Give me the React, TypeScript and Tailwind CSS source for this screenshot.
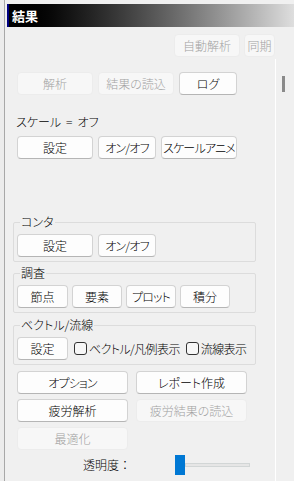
import type { ReactNode } from 'react';

const FONT = "font-['Noto_Sans_CJK_JP','Noto_Sans',sans-serif] [font-feature-settings:'palt'] font-light";

function Btn({ children, w, disabled = false, tight = false }: { children: ReactNode; w: string; disabled?: boolean; tight?: boolean }) {
  return (
    <div
      className={`${w} h-[23px] shrink-0 flex items-center justify-center rounded-[4px] border text-[12px] leading-none whitespace-nowrap ${
        tight ? 'tracking-[-0.8px]' : ''
      } ${
        disabled
          ? 'bg-[#f7f7f7] border-[#ececec] text-[#a2a2a2]'
          : 'bg-[#fdfdfd] border-[#d3d3d3] border-b-[#b5b5b5] text-black'
      }`}
    >
      {children}
    </div>
  );
}

function Group({ label, children, className = '' }: { label: string; children: ReactNode; className?: string }) {
  return (
    <fieldset className={`ml-[8px] w-[243px] border border-[#dcdcdc] rounded-[2px] px-[3px] pt-[5px] pb-[4px] ${className}`}>
      <legend className="ml-[3px] px-[1px] text-[12px] leading-[14px] text-black whitespace-nowrap">{label}</legend>
      {children}
    </fieldset>
  );
}

function Check({ label }: { label: string }) {
  return (
    <div className="flex items-center gap-[2px] shrink-0">
      <span className="w-[13px] h-[13px] shrink-0 rounded-[3px] border border-[#333] bg-[#f7f7f7]" />
      <span className="text-[12px] leading-none text-black whitespace-nowrap tracking-[-0.6px]">{label}</span>
    </div>
  );
}

export default function App() {
  return (
    <div className={`w-[294px] h-[481px] bg-[#f0f0f0] flex overflow-hidden ${FONT}`}>
      {/* left edge */}
      <div className="w-[4px] bg-[#ececec]" />
      <div className="w-px bg-[#a8a8a8]" />

      <div className="flex-1 flex flex-col pt-[4px]">
        {/* title bar */}
        <div className="ml-[2px] h-[23px] flex">
          <div className="w-[2px] bg-[#000080]" />
          <div className="flex-1 flex items-center pl-[3px] bg-gradient-to-r from-black to-[#dedede]">
            <span className="text-[13px] font-bold text-white leading-none">結果</span>
          </div>
        </div>

        {/* top buttons */}
        <div className="mt-[7px] flex justify-end gap-[4px] pr-[19px]">
          <Btn w="w-[66px]" disabled>自動解析</Btn>
          <Btn w="w-[31px]" disabled>同期</Btn>
        </div>

        <div className="flex-1 flex mt-[2px]">
          {/* content */}
          <div className="flex-1 flex flex-col pt-[13px]">
            <div className="flex gap-[5px] pl-[12px]">
              <Btn w="w-[76px]" disabled>解析</Btn>
              <Btn w="w-[76px]" disabled>結果の読込</Btn>
              <Btn w="w-[58px]">ログ</Btn>
            </div>

            <div className="mt-[20px] pl-[11px] flex text-[12px] leading-[14px] text-black whitespace-nowrap">
              <span>スケール</span>
              <span className="mx-[5px]">=</span>
              <span>オフ</span>
            </div>
            <div className="mt-[7px] flex gap-[5px] pl-[12px]">
              <Btn w="w-[76px]">設定</Btn>
              <Btn w="w-[58px]" tight>オン/オフ</Btn>
              <Btn w="w-[76px]" tight>スケールアニメ</Btn>
            </div>

            <Group label="コンタ" className="mt-[56px]">
              <div className="flex gap-[5px]">
                <Btn w="w-[76px]">設定</Btn>
                <Btn w="w-[58px]" tight>オン/オフ</Btn>
              </div>
            </Group>

            <Group label="調査" className="mt-[4px]">
              <div className="flex gap-[4px]">
                <Btn w="w-[51px]">節点</Btn>
                <Btn w="w-[50px]">要素</Btn>
                <Btn w="w-[50px]" tight>プロット</Btn>
                <Btn w="w-[50px]">積分</Btn>
              </div>
            </Group>

            <Group label="ベクトル/流線" className="mt-[5px]">
              <div className="flex items-center">
                <Btn w="w-[51px]">設定</Btn>
                <div className="ml-[6px]">
                  <Check label="ベクトル/凡例表示" />
                </div>
                <div className="ml-[6px]">
                  <Check label="流線表示" />
                </div>
              </div>
            </Group>

            <div className="mt-[6px] pl-[12px] grid grid-cols-[111px_111px] gap-x-[8px] gap-y-[5px]">
              <Btn w="w-[111px]" tight>オプション</Btn>
              <Btn w="w-[111px]">レポート作成</Btn>
              <Btn w="w-[111px]">疲労解析</Btn>
              <Btn w="w-[111px]" disabled>疲労結果の読込</Btn>
              <Btn w="w-[111px]" disabled>最適化</Btn>
            </div>

            <div className="mt-[5px] flex items-center">
              <span className="ml-[78px] w-[92px] text-[12px] leading-none text-black whitespace-nowrap [font-feature-settings:normal]">透明度：</span>
              <div className="w-[10px] h-[20px] bg-[#0078d4]" />
              <div className="w-[65px] h-[4px] bg-[#e6e6e6] border border-[#d2d6d6]" />
            </div>
          </div>

          {/* divider + scrollbar */}
          <div className="w-px bg-white" />
          <div className="w-[18px] pt-[17px]">
            <div className="ml-[6px] w-[3px] h-[16px] bg-[#8a8a8a]" />
          </div>
        </div>
      </div>
    </div>
  );
}
